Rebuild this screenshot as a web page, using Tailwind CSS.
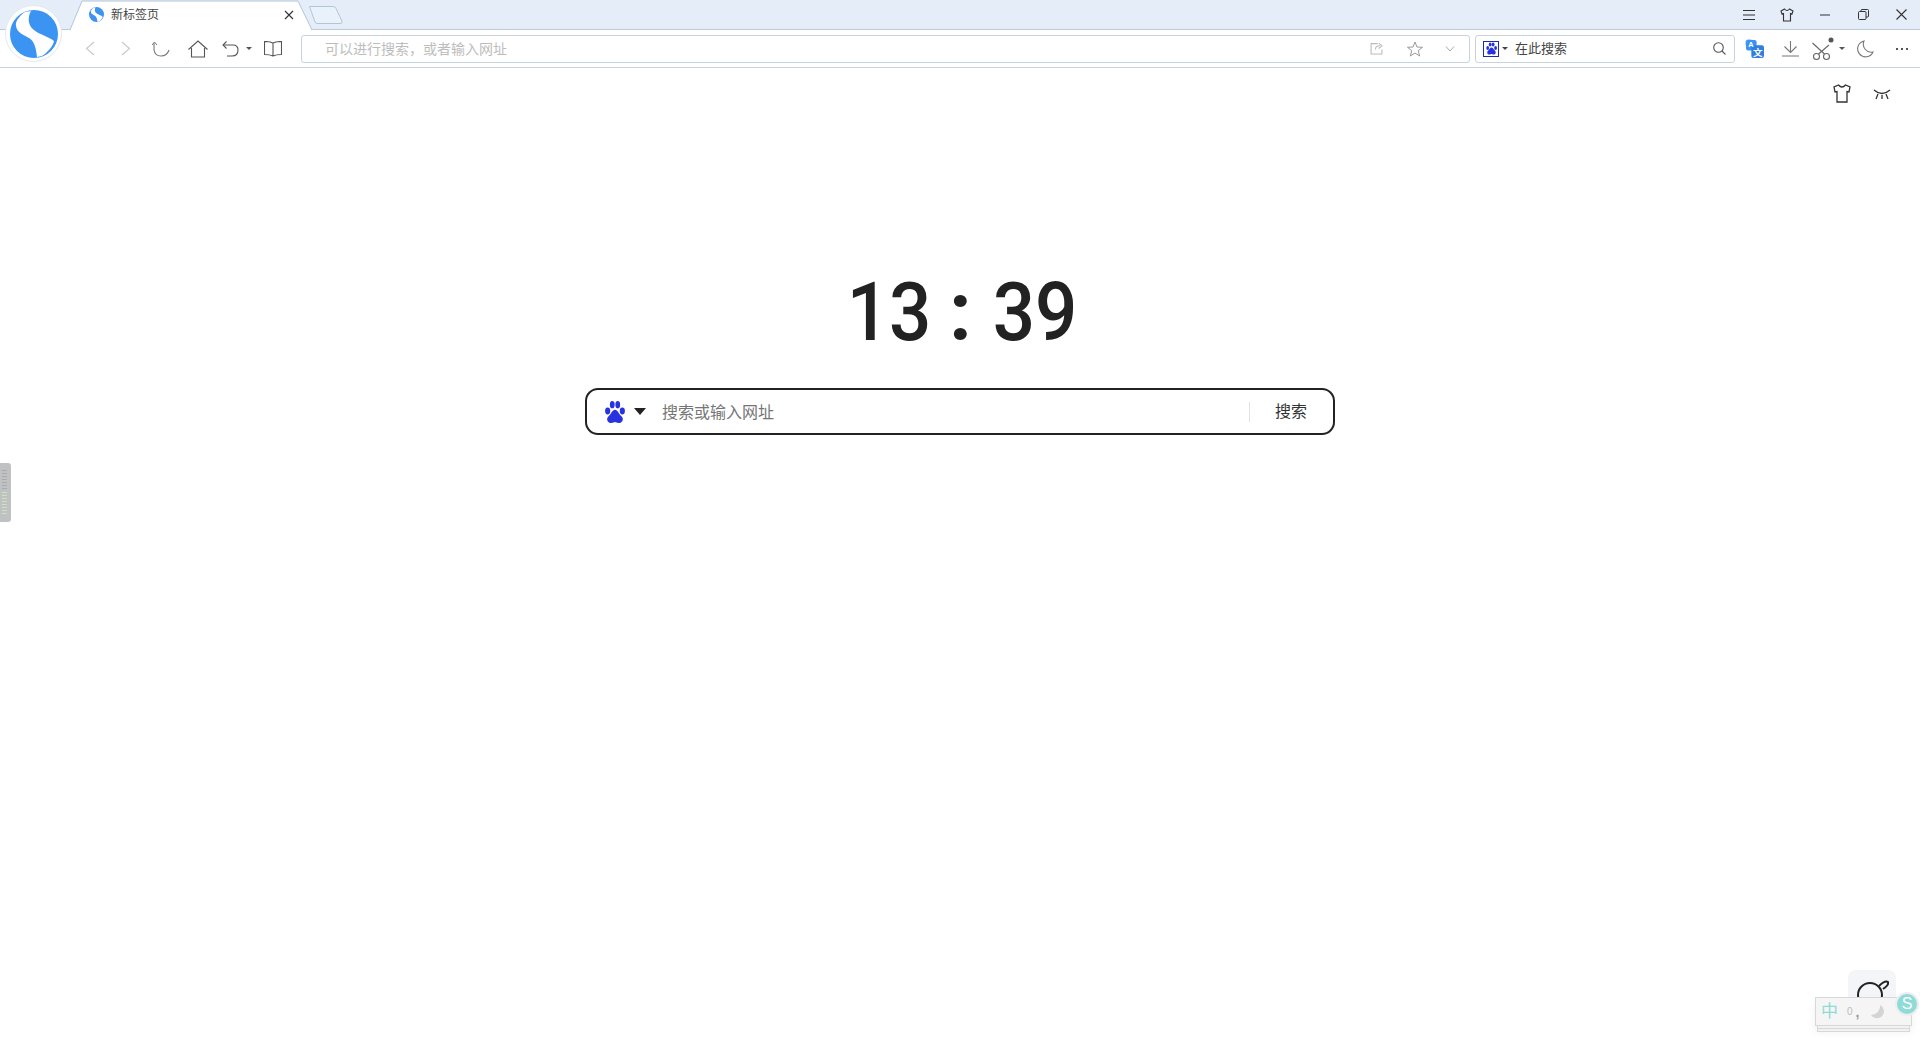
<!DOCTYPE html>
<html lang="zh-CN">
<head>
  <meta charset="UTF-8" />
  <title>新标签页</title>
  <script src="https://cdn.jsdelivr.net/npm/@tailwindcss/browser@4"></script>
</head>
<body class="bg-white h-screen overflow-hidden relative font-['Liberation_Sans','Noto_Sans_CJK_SC',sans-serif]">

  <!-- Title bar -->
  <header class="h-[30px] bg-[#e5edf8] border-b border-[#bccad8] flex items-start relative">
    <div class="w-[68px] shrink-0"></div>
    <!-- Active tab -->
    <div class="relative w-[246px] h-[30px] shrink-0">
      <svg class="absolute inset-0" width="246" height="30" viewBox="0 0 246 30" fill="none">
        <path d="M2 30 L14 1 H230 L244 30 Z" fill="#fff"/>
        <path d="M2 30 L14 1 H230 L244 30" stroke="#b3c5d9" stroke-width="1"/>
      </svg>
      <div class="relative flex items-center h-[29px] pl-[21px]">
        <svg width="15" height="15" viewBox="0 0 48 48" class="shrink-0">
          <circle cx="24" cy="24" r="24" fill="#3b93f2"/>
          <path d="M15 2 C9 6 5 12 6 16 C7 23 14 25 19 28 C24 31 26 37 27 47 L32 46 C38 42 43 36 44 31 C38 26 30 25 24 20 C20 17 18 12 19 7 C19 5 20 3 21 1 Z" fill="#fff"/>
        </svg>
        <span class="ml-[7px] text-[12px] text-[#444]">新标签页</span>
        <svg class="absolute left-[216px] top-[10px]" width="10" height="10" viewBox="0 0 10 10" stroke="#333" stroke-width="1.1"><path d="M1 1 L9 9 M9 1 L1 9"/></svg>
      </div>
    </div>
    <!-- New tab button -->
    <svg class="mt-[5px] -ml-[6px] shrink-0" width="36" height="20" viewBox="0 0 36 20" fill="none">
      <path d="M1.5 1.5 H25 Q27 1.5 28 3.5 L34 16 Q35 18.5 32 18.5 H9 Q8 18.5 7 17 Z" fill="#e9f1fb" stroke="#b3c5d9"/>
    </svg>
    <div class="flex-1"></div>
    <!-- Window controls -->
    <div class="flex items-center h-[29px]">
      <div class="w-[38px] flex justify-center">
        <svg width="12" height="10" viewBox="0 0 12 10" stroke="#333"><path d="M0 .5H12M0 5H12M0 9.5H12"/></svg>
      </div>
      <div class="w-[38px] flex justify-center">
        <svg width="14" height="14" viewBox="0 0 14 14" fill="none" stroke="#333" stroke-width="1.1"><path d="M4.5 1 L1 3 L2 6 L3.5 5.5 V13 H10.5 V5.5 L12 6 L13 3 L9.500 1 Q7 4 4.500 1 Z"/></svg>
      </div>
      <div class="w-[38px] flex justify-center">
        <svg width="10" height="2" viewBox="0 0 10 2" stroke="#333"><path d="M0 1H10"/></svg>
      </div>
      <div class="w-[38px] flex justify-center">
        <svg width="11" height="11" viewBox="0 0 11 11" fill="none" stroke="#333"><rect x=".5" y="2.500" width="7.500" height="8" rx="1"/><path d="M3 2.500 V1.500 Q3 .5 4 .5 H9.500 Q10.500 .5 10.500 1.500 V7 Q10.500 8 9.500 8 H8"/></svg>
      </div>
      <div class="w-[38px] flex justify-center">
        <svg width="11" height="11" viewBox="0 0 11 11" stroke="#333" stroke-width="1.1"><path d="M.5 .5 L10.500 10.500 M10.500 .5 L.5 10.500"/></svg>
      </div>
    </div>
  </header>

  <!-- Toolbar -->
  <nav class="h-[38px] bg-white border-b border-[#c7d4de] flex items-center">
    <div class="w-[72px] shrink-0"></div>
    <div class="w-[36px] shrink-0 flex justify-center">
      <svg width="10" height="15" viewBox="0 0 10 15" fill="none" stroke="#c8c8c8" stroke-width="1.1"><path d="M9 1 L1.500 7.500 L9 14"/></svg>
    </div>
    <div class="w-[35px] shrink-0 flex justify-center">
      <svg width="10" height="15" viewBox="0 0 10 15" fill="none" stroke="#c8c8c8" stroke-width="1.1"><path d="M1 1 L8.500 7.500 L1 14"/></svg>
    </div>
    <div class="w-[36px] shrink-0 flex justify-center">
      <svg width="18" height="16" viewBox="0 0 18 16" fill="none" stroke="#777" stroke-width="1.1"><path d="M2 2 V9 Q3 15 9 15 Q15 15 17 9"/><path d="M0 4 L2.500 1 L5 4" stroke-width="1"/></svg>
    </div>
    <div class="w-[37px] shrink-0 flex justify-center">
      <svg width="20" height="18" viewBox="0 0 20 18" fill="none" stroke="#555" stroke-width="1.1"><path d="M.5 9.500 L10 1 L19.500 9.500 M3.500 8 V17 H16.500 V8"/></svg>
    </div>
    <div class="w-[28px] shrink-0 flex justify-center">
      <svg width="17" height="16" viewBox="0 0 17 16" fill="none" stroke="#555" stroke-width="1.1"><path d="M1 4 H11 Q16 4 16 9 Q16 15 10 15 H5"/><path d="M4.500 .5 L1 4 L4.500 7.500"/></svg>
    </div>
    <div class="w-0 h-0 shrink-0 border-x-[3px] border-t-[3px] border-x-transparent border-t-[#555] ml-[2px]"></div>
    <div class="w-[42px] shrink-0 flex justify-center">
      <svg width="18" height="16" viewBox="0 0 18 16" fill="none" stroke="#555" stroke-width="1.1"><path d="M9 2 Q6 .5 .5 .5 V13.500 Q6 13.500 9 15 Q12 13.500 17.500 13.500 V.5 Q12 .5 9 2 V15"/></svg>
    </div>
    <div class="w-[7px] shrink-0"></div>

    <!-- Address bar -->
    <div class="w-[1169px] h-[28px] border border-[#c7d4de] rounded-[3px] flex items-center pl-[23px] shrink-0">
      <span class="flex-1 text-[14px] text-[#bdbdbd] pt-[1px]">可以进行搜索，或者输入网址</span>
      <svg width="13" height="13" viewBox="0 0 12 12" fill="none" stroke="#bbb"><path d="M7 1.500 H1 V11 H11 V7"/><path d="M5 7 Q5 3.500 9 3.500 M8 1 L11 3.500 L8 6"/></svg>
      <svg class="ml-[24px]" width="16" height="16" viewBox="0 0 16 16" fill="none" stroke="#999"><path d="M8 1 L10 6 L15.500 6.300 L11.200 9.700 L12.700 15 L8 12 L3.300 15 L4.800 9.700 L.5 6.300 L6 6 Z"/></svg>
      <svg class="ml-[22px] mr-[14px]" width="10" height="6" viewBox="0 0 10 6" fill="none" stroke="#aaa"><path d="M1 .5 L5 5 L9 .5"/></svg>
    </div>
    <div class="w-[5px] shrink-0"></div>

    <!-- Search box -->
    <div class="w-[260px] h-[28px] border border-[#c7d4de] rounded-[3px] flex items-center pl-[7px] shrink-0">
      <div class="w-[16px] h-[16px] border border-[#1a2fa0] flex items-center justify-center shrink-0">
        <svg width="13" height="13" viewBox="0 0 24 24" fill="#2932e1">
          <ellipse cx="5" cy="11" rx="2.600" ry="3.600"/><ellipse cx="9.500" cy="4.500" rx="2.600" ry="3.800"/><ellipse cx="15" cy="4.500" rx="2.600" ry="3.800"/><ellipse cx="19.500" cy="11" rx="2.600" ry="3.600"/>
          <path d="M12 10 C9 10 8 14 5.500 16 C3 18.500 4 23 8 23 C10 23 11 22 12 22 C13 22 14 23 16 23 C20 23 21 18.500 18.500 16 C16 14 15 10 12 10 Z"/>
        </svg>
      </div>
      <div class="ml-[3px] w-0 h-0 border-x-[3px] border-t-[3px] border-x-transparent border-t-[#444]"></div>
      <span class="ml-[7px] flex-1 text-[13px] text-[#444]">在此搜索</span>
      <svg class="mr-[8px]" width="13" height="13" viewBox="0 0 13 13" fill="none" stroke="#555" stroke-width="1.100"><circle cx="5.500" cy="5.500" r="4.800"/><path d="M9 9 L12.500 12.500"/></svg>
    </div>

    <!-- Toolbar right -->
    <div class="w-[10px] shrink-0"></div>
    <svg class="shrink-0" width="19" height="19" viewBox="0 0 18 18">
      <path d="M1 6 V3 Q1 1 3 1 H6 M17 12 V15 Q17 17 15 17 H12" fill="none" stroke="#6fb1f5"/>
      <rect x="1" y="1" width="10" height="10" rx="2" fill="#3b93f2"/>
      <rect x="6" y="6" width="12" height="12" rx="2" fill="#2f7fe0"/>
      <text x="3" y="8" font-size="7" fill="#fff" font-family="Liberation Sans" font-weight="700">A</text>
      <text x="7.500" y="16" font-size="9" fill="#fff" font-family="Noto Sans CJK SC" font-weight="700">文</text>
    </svg>
    <div class="w-[18px] shrink-0"></div>
    <svg class="shrink-0" width="17" height="17" viewBox="0 0 17 17" fill="none" stroke="#777" stroke-width="1.100"><path d="M8.500 1 V12 M2.500 6.500 L8.500 12.500 L14.500 6.500 M0 16 H17"/></svg>
    <div class="w-[13px] shrink-0"></div>
    <svg class="shrink-0" width="24" height="24" viewBox="0 0 24 24" fill="none" stroke="#666" stroke-width="1.100"><circle cx="4.500" cy="19.500" r="3"/><circle cx="14.500" cy="19.500" r="3"/><path d="M0.500 6 L12.500 17 M17 8 L6.500 17"/><circle cx="19" cy="3" r="2.500" fill="#555" stroke="none"/></svg>
    <div class="ml-[3px] w-0 h-0 border-x-[3px] border-t-[3px] border-x-transparent border-t-[#555] shrink-0"></div>
    <div class="w-[11px] shrink-0"></div>
    <svg class="shrink-0" width="18" height="18" viewBox="0 0 18 18" fill="none" stroke="#777" stroke-width="1.100"><path d="M8 1 A8 8 0 1 0 17 12 A8 8 0 0 1 8 1 Z"/></svg>
    <div class="w-[22px] shrink-0"></div>
    <div class="flex gap-[3px] shrink-0">
      <i class="w-[2px] h-[2px] bg-[#555] block"></i><i class="w-[2px] h-[2px] bg-[#555] block"></i><i class="w-[2px] h-[2px] bg-[#555] block"></i>
    </div>
  </nav>

  <!-- New tab content -->
  <main class="relative flex flex-col items-center">
    <div class="self-end flex items-center pt-[16px] pr-[29px] gap-[22px]">
      <svg width="18" height="19" viewBox="0 0 18 19" fill="none" stroke="#333" stroke-width="1.300"><path d="M5.500 1 L1 3 L2 8 L4 7.500 V18 H14 V7.500 L16 8 L17 3 L12.500 1 Q9 5 5.500 1 Z"/></svg>
      <svg class="mt-[2px]" width="18" height="11" viewBox="0 0 18 11" fill="none" stroke="#333" stroke-width="1.300"><path d="M1 1 Q9 8 17 1 M5 5 L3 10 M13 5 L15 10 M9 6 V10"/></svg>
    </div>
    <div class="mt-[162px] h-[94px] ml-[5px] flex items-center justify-center text-[81px] leading-none text-[#222] font-['Roboto',sans-serif]">
      <span class="w-[84px] flex justify-center scale-x-[0.92] font-medium">13</span>
      <span class="w-[60px] flex justify-center font-bold">:</span>
      <span class="w-[88px] flex justify-center scale-x-[0.92] font-medium">39</span>
    </div>
    <div class="mt-[29px] w-[750px] h-[47px] border-2 border-[#222] rounded-[13px] flex items-center">
      <svg class="ml-[17px] shrink-0" width="22" height="22" viewBox="0 0 24 24" fill="#2932e1">
        <ellipse cx="4" cy="11" rx="2.800" ry="3.800"/><ellipse cx="9" cy="4" rx="2.600" ry="4"/><ellipse cx="15" cy="4" rx="2.600" ry="4"/><ellipse cx="20" cy="11" rx="2.800" ry="3.800"/>
        <path d="M12 9.500 C9 9.500 8 14 5 16.500 C2 19 3.500 24 8 24 C10 24 11 23 12 23 C13 23 14 24 16 24 C20.500 24 22 19 19 16.500 C16 14 15 9.500 12 9.500 Z"/>
      </svg>
      <div class="ml-[8px] w-0 h-0 border-x-[6px] border-t-[7px] border-x-transparent border-t-[#222] shrink-0"></div>
      <span class="ml-[16px] flex-1 text-[16px] text-[#757575] pt-[2px]">搜索或输入网址</span>
      <div class="w-px h-[20px] bg-[#e2e2e2] shrink-0"></div>
      <span class="ml-[25px] mr-[26px] text-[16px] text-[#333] pt-[1px]">搜索</span>
    </div>
  </main>

  <!-- Logo over the tab strip -->
  <div class="absolute left-[5px] top-[5px] w-[57px] h-[57px] rounded-full bg-white border border-[#e3e9ef] flex items-center justify-center">
    <svg width="48" height="48" viewBox="0 0 48 48">
      <circle cx="24" cy="24" r="24" fill="#3b93f2"/>
      <path d="M15 2 C9 6 5 12 6 16 C7 23 14 25 19 28 C24 31 26 37 27 47 L32 46 C38 42 43 36 44 31 C38 26 30 25 24 20 C20 17 18 12 19 7 C19 5 20 3 21 1 Z" fill="#fff"/>
    </svg>
  </div>

  <!-- Side handle -->
  <div class="absolute left-0 top-[463px] w-[11px] h-[59px] bg-[#bfc1c3] rounded-r-[3px] flex flex-col items-start pl-[2px] pt-[7px] gap-[2px]">
    <i class="block w-[5px] h-[20px] bg-[repeating-linear-gradient(#a9abad_0,#a9abad_1px,transparent_1px,transparent_3px)]"></i>
    <i class="block w-[5px] h-[24px] bg-[repeating-linear-gradient(#dfe3a8_0,#b8e3c8_1px,transparent_1px,transparent_3px)]"></i>
  </div>

  <!-- Bottom right: planet button and IME bar -->
  <div class="absolute left-[1848px] top-[970px] w-[48px] h-[40px] bg-[#f3f5f8] rounded-t-[8px] flex justify-center pt-[8px]">
    <svg width="34" height="30" viewBox="0 0 34 30" fill="none" stroke="#222" stroke-width="2"><circle cx="15" cy="17" r="12"/><path d="M24 8 Q30 2 33 4 Q34 7 28 11"/></svg>
  </div>
  <div class="absolute left-[1815px] top-[997px] w-[97px] h-[29px] bg-[#f5f5f5] border border-[#d8d8d8] flex items-center pl-[5px] shadow-[0_6px_8px_rgba(0,0,0,0.06)]">
    <span class="text-[17px] text-[#8fdbd8]">中</span>
    <span class="ml-[9px] text-[10px] text-[#bbb]">0</span>
    <span class="ml-[3px] text-[14px] font-bold text-[#999] leading-none">,</span>
    <svg class="ml-[12px]" width="14" height="14" viewBox="0 0 14 14"><path d="M9 0 A7 7 0 1 1 0 10 A9 9 0 0 0 9 0 Z" fill="#d4d4d4"/></svg>
  </div>
  <div class="absolute left-[1817px] top-[1026px] w-[93px] h-[3px] border-x border-b border-[#d8d8d8] bg-[#f2f2f2]"></div>
  <div class="absolute left-[1817px] top-[1029px] w-[93px] h-[3px] border-x border-b border-[#d8d8d8] bg-[#f2f2f2]"></div>
  <div class="absolute left-[1895px] top-[992px] w-[24px] h-[24px] rounded-full bg-[#8fdbd8] border-2 border-[#eee] flex items-center justify-center text-[16px] text-white">S</div>
</body>
</html>
